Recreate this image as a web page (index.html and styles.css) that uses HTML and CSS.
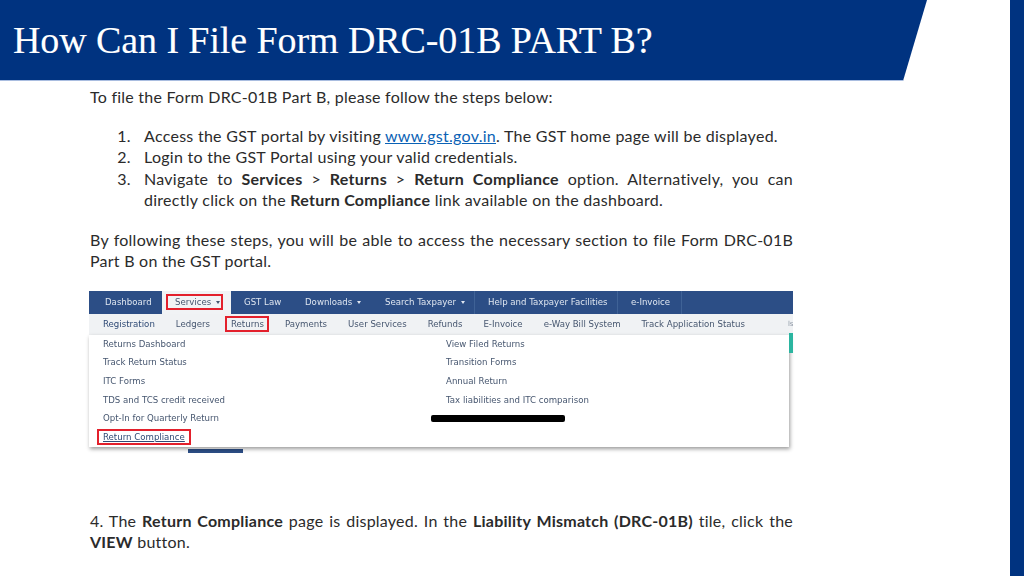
FILE: index.html
```html
<!DOCTYPE html>
<html lang="en">
<head>
    <meta charset="UTF-8">
    <meta name="viewport" content="width=device-width, initial-scale=1.0">
    <title>How Can I File Form DRC-01B PART B?</title>
    <link rel="stylesheet" href="styles.css">
</head>
<body>
    <div class="slide">
        <div class="slide-main">
            <div class="title-bar">
                <h1 class="title">How Can I File Form DRC-01B PART B?</h1>
            </div>
            <div class="content">
                <p class="intro">To file the Form DRC-01B Part B, please follow the steps below:</p>
                <ol class="steps">
                    <li>Access the GST portal by visiting <a href="#" class="link">www.gst.gov.in</a>. The GST home page will be displayed.</li>
                    <li>Login to the GST Portal using your valid credentials.</li>
                    <li class="justified">Navigate to <b>Services</b> &gt; <b>Returns</b> &gt; <b>Return Compliance</b> option. Alternatively, you can directly click on the <b>Return Compliance</b> link available on the dashboard.</li>
                </ol>
                <p class="justified follow">By following these steps, you will be able to access the necessary section to file Form DRC-01B Part B on the GST portal.</p>

                <div class="portal">
                    <div class="nav-main">
                        <span class="nav-item dashboard">Dashboard</span>
                        <span class="nav-tab"><span class="marked services">Services <i class="caret"></i></span></span>
                        <span class="nav-item gst-law">GST Law</span>
                        <span class="nav-item downloads">Downloads <i class="caret"></i></span>
                        <span class="nav-item search">Search Taxpayer <i class="caret"></i></span>
                        <span class="nav-item help">Help and Taxpayer Facilities</span>
                        <span class="nav-item invoice">e-Invoice</span>
                    </div>
                    <div class="sub-wrap">
                        <div class="nav-sub">
                            <span class="sub-item first">Registration</span>
                            <span class="sub-item">Ledgers</span>
                            <span class="sub-item"><span class="marked returns">Returns</span></span>
                            <span class="sub-item">Payments</span>
                            <span class="sub-item">User Services</span>
                            <span class="sub-item">Refunds</span>
                            <span class="sub-item">E-Invoice</span>
                            <span class="sub-item">e-Way Bill System</span>
                            <span class="sub-item">Track Application Status</span>
                            <span class="sub-cut">ls</span>
                        </div>
                        <div class="menu">
                            <div class="menu-col">
                                <span>Returns Dashboard</span>
                                <span>Track Return Status</span>
                                <span>ITC Forms</span>
                                <span>TDS and TCS credit received</span>
                                <span>Opt-In for Quarterly Return</span>
                                <span class="compliance"><span class="marked"><u>Return Compliance</u></span></span>
                            </div>
                            <div class="menu-col right">
                                <span>View Filed Returns</span>
                                <span>Transition Forms</span>
                                <span>Annual Return</span>
                                <span>Tax liabilities and ITC comparison</span>
                                <span class="redacted"></span>
                            </div>
                        </div>
                        <div class="teal-edge"></div>
                    </div>
                    <div class="peek"></div>
                </div>

                <p class="justified closing">4. The <b>Return Compliance</b> page is displayed. In the <b>Liability Mismatch (DRC-01B)</b> tile, click the <b>VIEW</b> button.</p>
            </div>
        </div>
        <div class="side-bar"></div>
    </div>
</body>
</html>
```

FILE: styles.css
```css
:root {
    --navy: #003380;
    --portal-blue: #2c4e86;
    --text-color: #2b2b2b;
    --menu-text: #46566f;
    --mark-red: #e3202c;
}

* {
    box-sizing: border-box;
}

body {
    margin: 0;
    background: white;
    font-family: 'Lato', 'Open Sans', sans-serif;
    color: var(--text-color);
}

.slide {
    width: 1024px;
    height: 576px;
    display: flex;
    overflow: hidden;
}

.slide-main {
    width: 1010px;
}

.side-bar {
    width: 14px;
    background: var(--navy);
}

.title-bar {
    width: 927px;
    height: 81px;
    padding: 0 0 0 13px;
    background: var(--navy);
    border-bottom: 1px solid #a9bde0;
    clip-path: polygon(0 0, 100% 0, 903px 100%, 0 100%);
    display: flex;
    align-items: center;
}

.title {
    margin: 0;
    color: white;
    font-family: 'Liberation Serif', serif;
    font-weight: normal;
    font-size: 38px;
    letter-spacing: -0.09px;
    -webkit-text-stroke: 0.1px white;
}

.content {
    width: 703px;
    margin-left: 90px;
    font-size: 16px;
    letter-spacing: 0.24px;
    line-height: 21.5px;
}

.intro {
    margin: 5px 0 17px;
}

.steps {
    margin: 0 0 18px;
    padding-left: 54px;
    letter-spacing: 0.27px;
}

.steps li::marker {
    content: counter(list-item) ".   ";
}

.justified {
    text-align: justify;
}

.link {
    color: #0b62b5;
}

.follow {
    margin: 0;
}

.portal {
    width: 704px;
    margin: 19px 0 0 -1px;
    font-family: 'DejaVu Sans', sans-serif;
    font-size: 8.6px;
    letter-spacing: 0;
    line-height: 12px;
    color: var(--menu-text);
    filter: blur(0.3px);
}

.nav-main {
    height: 23px;
    background: var(--portal-blue);
    display: flex;
    align-items: center;
    color: #dfe6f0;
}

.nav-item {
    height: 100%;
    display: flex;
    align-items: center;
    gap: 3px;
    border-right: 1px solid #3f6296;
}

.dashboard {
    width: 73px;
    padding-left: 16px;
    border-right: none;
}

.nav-tab {
    width: 69px;
    height: 100%;
    background: #f1f3f5;
    display: flex;
    align-items: center;
    padding-left: 4px;
    color: var(--menu-text);
}

.gst-law {
    width: 68px;
    padding-left: 13px;
    border-right: none;
}

.downloads {
    width: 77px;
    padding-left: 6px;
    border-right: none;
}

.search {
    width: 99px;
    padding-left: 9px;
}

.help {
    width: 143px;
    padding-left: 13px;
}

.invoice {
    width: 64px;
    padding-left: 13px;
}

.caret {
    display: inline-block;
    margin-left: 2px;
    vertical-align: middle;
    border-left: 2.5px solid transparent;
    border-right: 2.5px solid transparent;
    border-top: 3px solid currentColor;
}

.marked {
    display: inline-block;
    border: 2px solid var(--mark-red);
    padding: 1px 3px;
}

.services {
    width: 57px;
    padding: 0 0 0 7px;
    white-space: nowrap;
    line-height: 12px;
}

.returns {
    margin: 0 -5px 0 -6px;
    padding: 0 3px 0 4px;
}

.sub-wrap {
    position: relative;
    width: 700px;
}

.nav-sub {
    width: 704px;
    height: 21px;
    background: #f0f2f4;
    display: flex;
    align-items: center;
    gap: 21px;
    padding-left: 14px;
    white-space: nowrap;
}

.sub-item.first {
    color: #2f4a75;
}

.sub-cut {
    margin-left: 22px;
    font-size: 7px;
    color: #8b95a3;
}

.menu {
    height: 112px;
    background: white;
    box-shadow: 1px 2px 4px rgba(0, 0, 0, 0.4);
    display: flex;
}

.menu-col {
    flex-shrink: 0;
    width: 357px;
    padding-left: 14px;
    display: flex;
    flex-direction: column;
}

.menu-col.right {
    width: 343px;
    padding-left: 0;
}

.menu-col > span {
    flex-shrink: 0;
    height: 18.6px;
    display: flex;
    align-items: center;
}

.menu-col > .compliance {
    margin-left: -6px;
}

.compliance .marked {
    padding: 0 4px;
    color: #2f4a75;
}

.menu-col > .redacted {
    width: 134px;
    height: 7px;
    margin: 6px 0 0 -15px;
    border-radius: 2px;
    background: black;
}

.teal-edge {
    position: absolute;
    top: 19px;
    left: 700px;
    width: 4px;
    height: 20px;
    background: #2bb5a0;
}

.peek {
    width: 55px;
    height: 4px;
    margin: 2px 0 0 99px;
    background: var(--portal-blue);
}

.closing {
    margin: 57px 0 0;
}
```
